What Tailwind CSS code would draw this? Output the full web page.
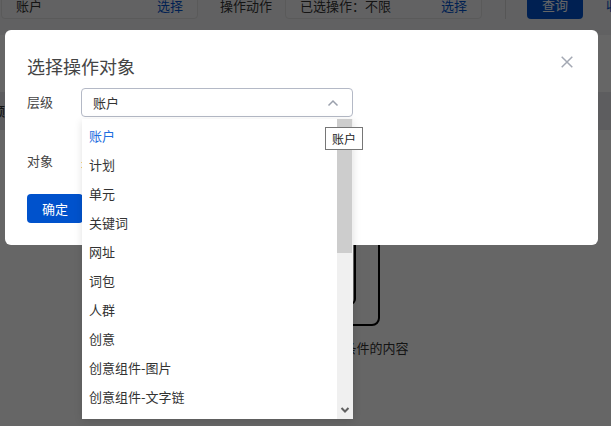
<!DOCTYPE html>
<html lang="zh-CN">
<head>
  <meta charset="UTF-8">
  <title>选择操作对象</title>
  <script src="https://cdn.jsdelivr.net/npm/@tailwindcss/browser@4"></script>
</head>
<body class="relative w-[611px] h-[426px] overflow-hidden bg-white text-[13px] text-[#333] font-['Noto_Sans_CJK_SC',sans-serif]">
  <!-- page behind the dialog -->
  <div class="h-[426px] flex flex-col">
    <div class="bg-[#f2f3f5] h-[35px] shrink-0">
      <div class="-mt-[10px] h-[29px] flex items-center pl-[1px] pr-0">
        <div class="w-[197px] h-[28px] shrink-0 rounded border border-[#e0e0e0] bg-white/30 flex items-center justify-between pl-[14px] pr-[14px] pt-[2px]">
          <span>账户</span><span class="text-[#0052cc]">选择</span>
        </div>
        <span class="ml-[22px] w-[65px] shrink-0 whitespace-nowrap pt-[2px]">操作动作</span>
        <div class="w-[197px] h-[28px] shrink-0 rounded border border-[#e0e0e0] bg-white/30 flex items-center justify-between px-[14px] pt-[2px]">
          <span>已选操作：不限</span><span class="text-[#0052cc]">选择</span>
        </div>
        <div class="ml-[23px] w-px h-[29px] shrink-0 bg-[#d8d8d8]"></div>
        <div class="ml-[21px] w-[56px] h-[29px] shrink-0 rounded bg-[#0052cc] text-white flex items-center justify-center">查询</div>
        <span class="ml-[23px] shrink-0 text-[#0052cc]">收</span>
      </div>
    </div>
    <div class="mt-[57px] h-[38px] shrink-0 bg-[#e8e9ee] flex items-center -ml-[8px] font-medium whitespace-nowrap">额</div>
    <div class="mt-[60px] pl-[89px] flex flex-col items-center">
      <svg class="w-[100px] h-[140px]" viewBox="0 0 100 140" fill="none" stroke="#000" stroke-width="2">
        <rect x="21" y="-20" width="58" height="155" rx="7"/>
        <rect x="-10" y="-20" width="65" height="134" rx="5"/>
      </svg>
      <span class="mt-2 leading-5 whitespace-nowrap text-[#333]">没有符合条件的内容</span>
    </div>
  </div>

  <!-- mask and dialog -->
  <div class="absolute inset-0 bg-black/60 pt-[30px] pl-[5px]">
    <div class="relative w-[593px] h-[215px] rounded-md bg-white pl-[22px] pt-[23px]">
      <h2 class="text-[18px] leading-[26px] text-[#444]">选择操作对象</h2>
      <svg class="absolute right-[25px] top-[26px] w-3 h-3" viewBox="0 0 12 12" fill="none" stroke="#a3a8b3" stroke-width="1.5">
        <path d="M.7.7l10.6 10.6M11.3.7L.7 11.3"/>
      </svg>
      <div class="mt-[9px] flex items-center h-[29px]">
        <span class="w-[54px] text-[#444] pb-[2px]">层级</span>
        <div class="w-[272px] h-[29px] rounded border border-[#b4b9c6] flex items-center justify-between pl-[11px] pr-[13px]">
          <span>账户</span>
          <svg class="w-[12px] h-[8px]" viewBox="0 0 12 8" fill="none" stroke="#9aa0ac" stroke-width="1.5"><path d="M1.5 6.5L6 2l4.500 4.500"/></svg>
        </div>
      </div>
      <div class="mt-[30px] flex items-center h-[29px]">
        <span class="w-[54px] text-[#444] pb-[2px]">对象</span>
        <span class="text-[#b06a2c]">未选择</span>
      </div>
      <button class="mt-[18px] block w-[56px] h-[29px] rounded bg-[#0052cc] text-white text-[13px]">确定</button>
    </div>
  </div>

  <!-- open dropdown -->
  <div class="absolute left-[82px] top-[119px] w-[271px] h-[300px] bg-white shadow-[0_2px_8px_rgba(0,0,0,0.12)] flex">
    <ul class="flex-1 pl-[7px] pt-[2px]">
      <li class="h-[29px] leading-[29px] text-[#1f6fe0]">账户</li>
      <li class="h-[29px] leading-[29px]">计划</li>
      <li class="h-[29px] leading-[29px]">单元</li>
      <li class="h-[29px] leading-[29px]">关键词</li>
      <li class="h-[29px] leading-[29px]">网址</li>
      <li class="h-[29px] leading-[29px]">词包</li>
      <li class="h-[29px] leading-[29px]">人群</li>
      <li class="h-[29px] leading-[29px]">创意</li>
      <li class="h-[29px] leading-[29px]">创意组件-图片</li>
      <li class="h-[29px] leading-[29px]">创意组件-文字链</li>
    </ul>
    <div class="w-[16px] bg-[#f0f0f0] flex flex-col justify-between">
      <div class="w-[15px] h-[134px] bg-[#cdcdcd]"></div>
      <svg class="w-[16px] h-[16px] mb-[1px]" viewBox="0 0 16 16" fill="none" stroke="#606060" stroke-width="2"><path d="M4.500 6l3.500 3.500L11.500 6"/></svg>
    </div>
  </div>

  <!-- native title tooltip -->
  <div class="absolute left-[325px] top-[127px] w-[38px] h-[23px] border border-[#767676] bg-white text-[12px] text-[#222] flex items-center justify-center">账户</div>
</body>
</html>
